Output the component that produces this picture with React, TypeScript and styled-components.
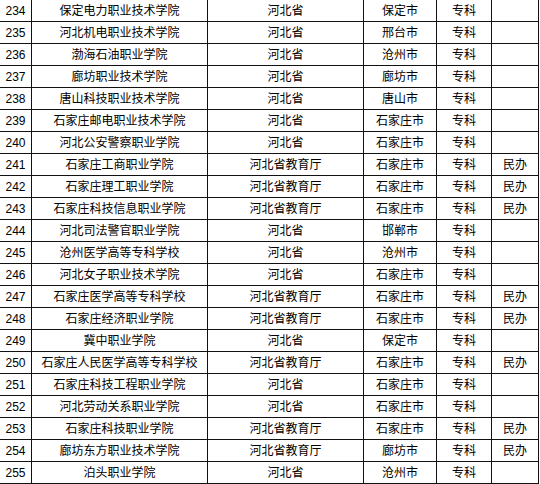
import React from "react";
import styled, { createGlobalStyle } from "styled-components";

const GlobalStyle = createGlobalStyle`
  html, body { margin: 0; padding: 0; background: #fff; }
  body { width: 540px; height: 484px; overflow: hidden; }
`;

const Table = styled.div`
  display: flex;
  flex-direction: column;
  width: 540px;
  font-family: "Liberation Sans", "Noto Sans CJK SC", sans-serif;
  font-size: 12px;
  color: #000;
`;

const Row = styled.div`
  display: grid;
  grid-template-columns: 32px 176px 156px 73px 55px 47px;
  height: 22px;
`;

const Cell = styled.div<{ $num?: boolean }>`
  box-sizing: border-box;
  border-right: 1px solid #111;
  border-bottom: 1px solid #111;
  display: flex;
  align-items: center;
  justify-content: center;
  white-space: nowrap;
  line-height: 1;
  padding-top: ${(p) => (p.$num ? "1px" : "0")};
`;

type R = [number, string, string, string, string, string];

const rows: R[] = [
  [234, "保定电力职业技术学院", "河北省", "保定市", "专科", ""],
  [235, "河北机电职业技术学院", "河北省", "邢台市", "专科", ""],
  [236, "渤海石油职业学院", "河北省", "沧州市", "专科", ""],
  [237, "廊坊职业技术学院", "河北省", "廊坊市", "专科", ""],
  [238, "唐山科技职业技术学院", "河北省", "唐山市", "专科", ""],
  [239, "石家庄邮电职业技术学院", "河北省", "石家庄市", "专科", ""],
  [240, "河北公安警察职业学院", "河北省", "石家庄市", "专科", ""],
  [241, "石家庄工商职业学院", "河北省教育厅", "石家庄市", "专科", "民办"],
  [242, "石家庄理工职业学院", "河北省教育厅", "石家庄市", "专科", "民办"],
  [243, "石家庄科技信息职业学院", "河北省教育厅", "石家庄市", "专科", "民办"],
  [244, "河北司法警官职业学院", "河北省", "邯郸市", "专科", ""],
  [245, "沧州医学高等专科学校", "河北省", "沧州市", "专科", ""],
  [246, "河北女子职业技术学院", "河北省", "石家庄市", "专科", ""],
  [247, "石家庄医学高等专科学校", "河北省教育厅", "石家庄市", "专科", "民办"],
  [248, "石家庄经济职业学院", "河北省教育厅", "石家庄市", "专科", "民办"],
  [249, "冀中职业学院", "河北省", "保定市", "专科", ""],
  [250, "石家庄人民医学高等专科学校", "河北省教育厅", "石家庄市", "专科", "民办"],
  [251, "石家庄科技工程职业学院", "河北省", "石家庄市", "专科", ""],
  [252, "河北劳动关系职业学院", "河北省", "石家庄市", "专科", ""],
  [253, "石家庄科技职业学院", "河北省教育厅", "石家庄市", "专科", "民办"],
  [254, "廊坊东方职业技术学院", "河北省教育厅", "廊坊市", "专科", "民办"],
  [255, "泊头职业学院", "河北省", "沧州市", "专科", ""],
];

export default function App() {
  return (
    <>
      <GlobalStyle />
      <Table>
        {rows.map((r) => (
          <Row key={r[0]}>
            <Cell $num>{r[0]}</Cell>
            <Cell>{r[1]}</Cell>
            <Cell>{r[2]}</Cell>
            <Cell>{r[3]}</Cell>
            <Cell>{r[4]}</Cell>
            <Cell>{r[5]}</Cell>
          </Row>
        ))}
      </Table>
    </>
  );
}
